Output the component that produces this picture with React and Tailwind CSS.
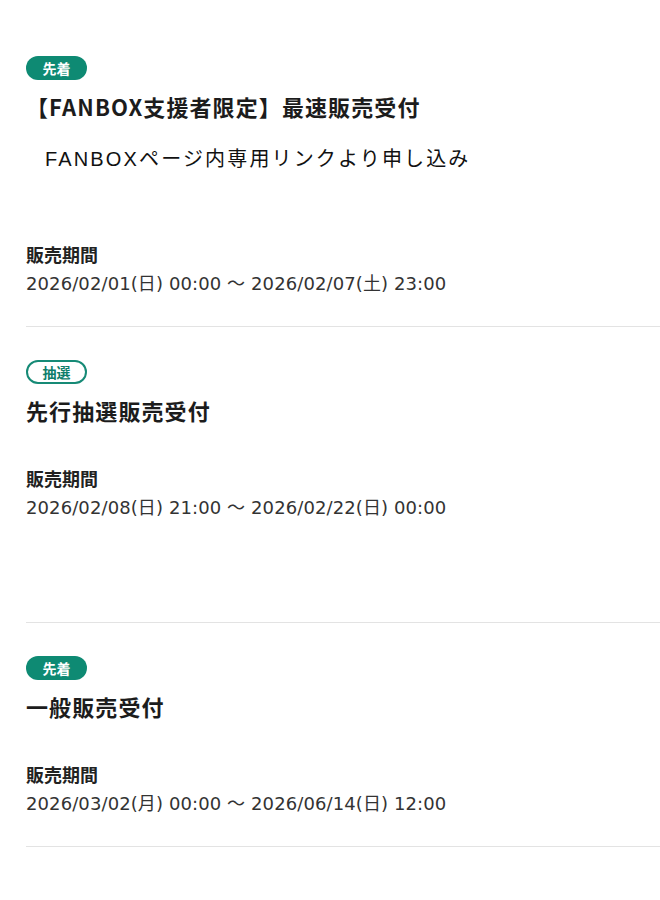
const sales = [
  {
    badge: '先着',
    outline: false,
    title: '【FANBOX支援者限定】最速販売受付',
    note: 'FANBOXページ内専用リンクより申し込み',
    period: '2026/02/01(日) 00:00 ～ 2026/02/07(土) 23:00',
    extra: false,
  },
  {
    badge: '抽選',
    outline: true,
    title: '先行抽選販売受付',
    period: '2026/02/08(日) 21:00 ～ 2026/02/22(日) 00:00',
    extra: true,
  },
  {
    badge: '先着',
    outline: false,
    title: '一般販売受付',
    period: '2026/03/02(月) 00:00 ～ 2026/06/14(日) 12:00',
    extra: false,
  },
];

function Badge({ label, outline }) {
  return (
    <span
      className={
        outline
          ? 'inline-flex items-center justify-center w-[61px] h-[24px] rounded-full border-2 border-[#168a76] bg-white text-[#0d7d69] text-[14px] font-bold leading-none'
          : 'inline-flex items-center justify-center w-[61px] h-[24px] rounded-full bg-[#0e8a73] text-white text-[14px] font-bold leading-none'
      }
    >
      {label}
    </span>
  );
}

function SaleItem({ item }) {
  return (
    <section className="pt-[33px] pb-[29px] border-b border-[#e3e3e3]">
      <div className="h-[24px] flex">
        <Badge label={item.badge} outline={item.outline} />
      </div>
      <h2 className="mt-[10px] text-[22px] leading-[32px] font-bold tracking-[0.05em] text-[#1c1c1c]">
        {item.title}
      </h2>

      {item.note && (
        <p className="mt-[22px] pl-[19px] text-[20px] leading-[30px] tracking-[2.15px] text-[#111] font-['Liberation_Sans','Noto_Sans_CJK_JP',sans-serif]">
          {item.note}
        </p>
      )}

      <div className={item.note ? 'mt-[67px]' : 'mt-[39px]'}>
        <p className="text-[18px] leading-[26px] font-bold text-[#222]">販売期間</p>
        <p className="mt-[4px] text-[18px] leading-[26px] tracking-[0.1px] text-[#333] font-['DejaVu_Sans','Noto_Sans_CJK_JP',sans-serif]">
          {item.period}
        </p>
      </div>

      {item.extra && <div className="h-[72px]" />}
    </section>
  );
}

export default function App() {
  return (
    <div className="min-h-[900px] bg-white pt-[23px] pl-[26px] font-['Noto_Sans_CJK_JP','Noto_Sans',sans-serif]">
      {sales.map((item, i) => (
        <SaleItem key={i} item={item} />
      ))}
    </div>
  );
}
